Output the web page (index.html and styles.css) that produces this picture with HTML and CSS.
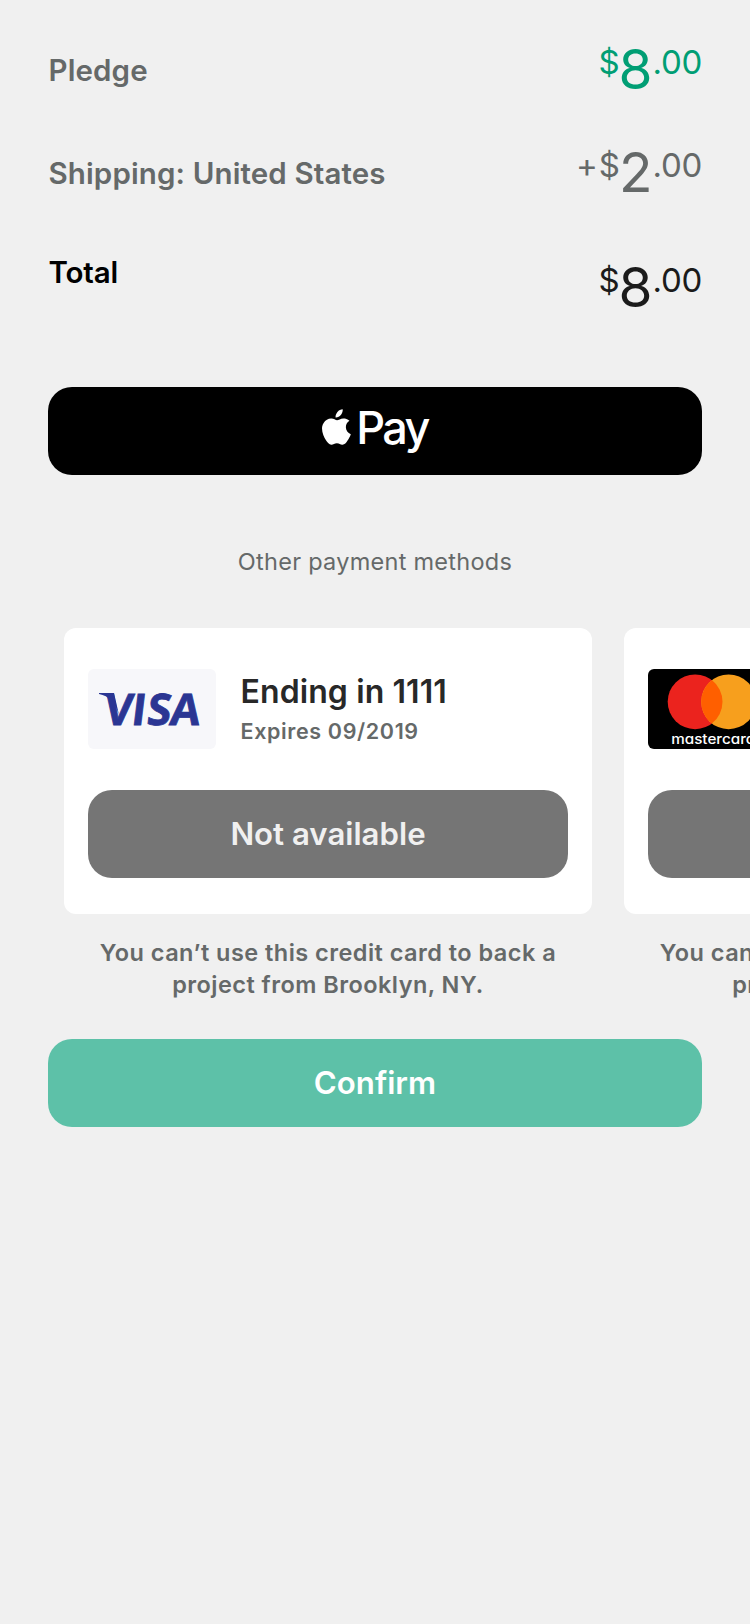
FILE: index.html
```html
<!DOCTYPE html>
<html lang="en">
<head>
<meta charset="utf-8">
<title>Pledge</title>
<link rel="stylesheet" href="styles.css">
</head>
<body>
<main class="page">
  <section class="summary">
    <div class="row">
      <span class="label">Pledge</span>
      <span class="amount green"><span class="small sign">$</span><span class="big">8</span><span class="small cents">.00</span></span>
    </div>
    <div class="row shipping">
      <span class="label">Shipping: United States</span>
      <span class="amount gray"><span class="small plus">+</span><span class="small sign">$</span><span class="big">2</span><span class="small cents">.00</span></span>
    </div>
    <div class="row total">
      <span class="label total-label">Total</span>
      <span class="amount"><span class="small sign">$</span><span class="big">8</span><span class="small cents">.00</span></span>
    </div>
  </section>

  <button class="button apple-pay">
    <svg class="apple" viewBox="0 0 29 36" width="30" height="37">
      <path d="M21 0.200C21.300 2.300 20.400 4.300 19.200 5.800C17.900 7.300 15.900 8.400 14.100 8.200C13.800 6.200 14.800 4.100 15.900 2.800C17.200 1.300 19.300 0.300 21 0.200Z"/>
      <path d="M27.600 11.500C25.200 13 24.100 15.100 24.100 17.700C24.200 20.900 26 23.300 28.900 24.500C28.200 26.600 27 28.900 25.600 30.900C24.400 32.700 23 34.700 20.800 34.700C18.700 34.800 17.900 33.400 15.400 33.400C12.900 33.400 12 34.700 10 34.800C7.900 34.900 6.300 32.700 4.900 30.700C1.900 26.300 -1 18.300 2.500 13.500C4.100 10.900 6.900 9.300 9.800 9.300C12.100 9.200 14.200 10.900 15.500 10.900C16.900 10.900 19.400 8.900 22.100 9.200C23.200 9.200 26 9.600 27.600 11.500Z"/>
    </svg>
    <span class="pay">Pay</span>
  </button>

  <p class="other">Other payment methods</p>

  <section class="cards">
    <div class="item">
      <div class="card">
        <div class="details">
          <svg class="logo" viewBox="0 0 128 80" width="128" height="80">
            <rect width="128" height="80" rx="6" fill="#f7f7fa"/>
            <path class="visa-ink" d="M11 24H26L31 46C27 33 21 27 11 24.900Z"/>
            <text class="visa visa-ink" transform="translate(0 55.500) skewX(-7)" x="15 42.200 57.700 80.700" y="0">VISA</text>
          </svg>
          <div class="info">
            <div class="ending">Ending in 1111</div>
            <div class="expires">Expires 09/2019</div>
          </div>
        </div>
        <button class="button unavailable">Not available</button>
      </div>
      <p class="hint">You can’t use this credit card to back a<br>project from Brooklyn, NY.</p>
    </div>
    <div class="item">
      <div class="card">
        <div class="details">
          <svg class="logo" viewBox="0 0 128 80" width="128" height="80">
            <rect width="128" height="80" rx="6" fill="#000"/>
            <circle cx="47.100" cy="32.800" r="27.400" fill="#eb231e"/>
            <circle cx="80.600" cy="32.800" r="27.400" fill="#f79f1d"/>
            <path d="M63.850 11.120A27.400 27.400 0 0 1 63.850 54.480A27.400 27.400 0 0 1 63.850 11.120Z" fill="#ff5f00"/>
            <text class="mc" x="23.200" y="74.700" textLength="84" lengthAdjust="spacingAndGlyphs">mastercard</text>
          </svg>
        </div>
        <button class="button unavailable"></button>
      </div>
      <p class="hint">You can’t use this credit card to back a<br>project from Brooklyn, NY.</p>
    </div>
  </section>

  <button class="button confirm">Confirm</button>
</main>
</body>
</html>
```
FILE: styles.css
```css
* { box-sizing: border-box; }
body {
  margin: 0;
  background: #f0f0f0;
  font-family: Inter, "Liberation Sans", sans-serif;
  color: #1b1b1b;
}
.page { width: 750px; height: 1624px; overflow: hidden; }
p { margin: 0; }
.summary { height: 387px; padding: 0 48px; }
.row {
  display: flex;
  align-items: center;
  justify-content: space-between;
  height: 140px;
}
.shipping { height: 66px; }
.total { height: 120px; align-items: flex-start; padding-top: 51px; }
.label {
  padding-left: 0.5px;
  font-size: 29.5px;
  line-height: 60px;
  font-weight: 560;
  letter-spacing: 0.13px;
  color: #656969;
  white-space: nowrap;
}
.total-label { color: #000; line-height: 30px; letter-spacing: -0.15px; }
.amount { display: flex; align-items: flex-start; padding-bottom: 2px; }
.total .amount { padding: 1px 0 0; }
.green { color: #009e74; }
.gray { color: #656969; }
.small { font-size: 33px; line-height: 44px; }
.sign { margin-right: -0.5px; }
.plus { margin-right: 1px; }
.cents { letter-spacing: -0.3px; }
.big { font-size: 55px; line-height: 58px; margin: 0 0 0 -0.5px; }
.button {
  display: flex;
  align-items: center;
  justify-content: center;
  height: 88px;
  padding: 0;
  border: 0;
  border-radius: 24px;
  font-family: inherit;
  font-size: 31.2px;
  font-weight: 560;
}
.apple-pay { width: 654px; margin: 0 48px; padding: 0 1px 0 0; background: #000; color: #fff; gap: 5px; }
.apple { fill: #fff; position: relative; top: -4px; }
.pay { font-size: 45px; font-weight: 480; line-height: 60px; letter-spacing: -2.6px; padding-bottom: 6px; }
.other {
  height: 153px;
  padding-top: 72px;
  text-align: center;
  font-size: 23.5px;
  line-height: 30px;
  letter-spacing: 0.27px;
  color: #656969;
}
.cards { display: flex; gap: 32px; padding-left: 64px; height: 411px; }
.item { flex: none; width: 528px; }
.card { height: 286px; padding: 41px 24px 36px; border-radius: 12px; background: #fff; }
.details { display: flex; gap: 24px; margin-bottom: 41px; }
.logo { flex: none; }
.visa { font: 700 43.500px "Open Sans", sans-serif; stroke: #2b3693; stroke-width: 0.8px; }
.visa-ink { fill: #2b3693; }
.mc { font: 500 14px Inter, sans-serif; font-feature-settings: "cv11"; fill: #fff; }
.info { padding: 2px 0 0 0.5px; white-space: nowrap; }
.ending { font-size: 32px; line-height: 42px; font-weight: 560; letter-spacing: 0.1px; color: #282828; }
.expires { font-size: 21.5px; line-height: 36px; font-weight: 560; color: #656969; letter-spacing: 0.63px; }
.unavailable { width: 480px; background: #757575; color: #f0f0f0; }
.hint {
  padding-top: 23px;
  text-align: center;
  font-size: 23.5px;
  line-height: 32px;
  font-weight: 560;
  letter-spacing: 0.46px;
  color: #656969;
  white-space: nowrap;
}
.confirm { width: 654px; margin: 0 48px; background: #5dc1a8; color: #fff; }
```
